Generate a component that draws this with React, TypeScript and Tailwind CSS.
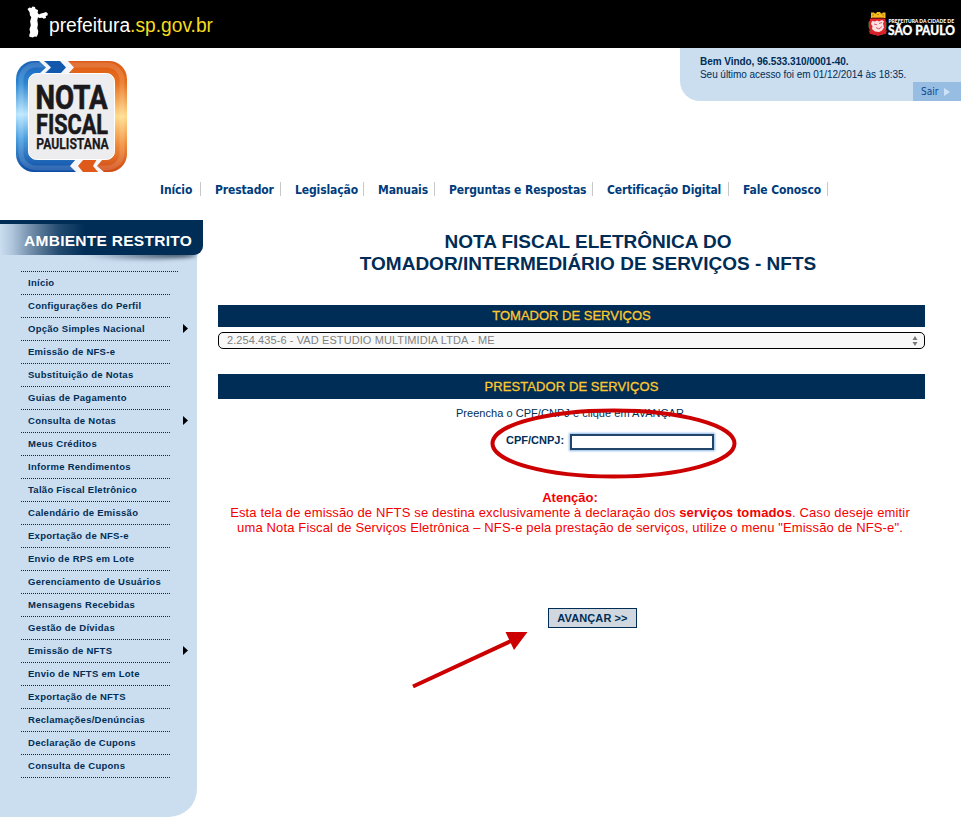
const menu: { label: string; sub?: boolean }[] = [
  { label: "Início" },
  { label: "Configurações do Perfil" },
  { label: "Opção Simples Nacional", sub: true },
  { label: "Emissão de NFS-e" },
  { label: "Substituição de Notas" },
  { label: "Guias de Pagamento" },
  { label: "Consulta de Notas", sub: true },
  { label: "Meus Créditos" },
  { label: "Informe Rendimentos" },
  { label: "Talão Fiscal Eletrônico" },
  { label: "Calendário de Emissão" },
  { label: "Exportação de NFS-e" },
  { label: "Envio de RPS em Lote" },
  { label: "Gerenciamento de Usuários" },
  { label: "Mensagens Recebidas" },
  { label: "Gestão de Dívidas" },
  { label: "Emissão de NFTS", sub: true },
  { label: "Envio de NFTS em Lote" },
  { label: "Exportação de NFTS" },
  { label: "Reclamações/Denúncias" },
  { label: "Declaração de Cupons" },
  { label: "Consulta de Cupons" },
];

const nav = [
  { label: "Início", width: "w-[41px]" },
  { label: "Prestador", width: "w-[66px]" },
  { label: "Legislação", width: "w-[69px]" },
  { label: "Manuais", width: "w-[57px]" },
  { label: "Perguntas e Respostas", width: "w-[144px]" },
  { label: "Certificação Digital", width: "w-[122px]" },
  { label: "Fale Conosco", width: "w-[85px]" },
];

function PrefeituraLogo() {
  return (
    <svg className="block" width="200" height="48" viewBox="20 0 200 48">
      <path
        d="M27.500 9l2-1.500 2 .5 1-1.500 2.500.5.500 2 2.500 1-.3 3 1.300 1.500 2-1 3-.8 2-.7 1.800 1.500-.3 2-1.800.5.300 2-2.500.7-1-1-3 .3-1.500-.7-.7 3 .6 4-.6 4 1 3-.4 3-1.200 2.500-2-.4-2 1.200-3.200-.8-.3-1.500 1-3-.7-3 1.300-4-.7-4 1.200-4-1.400-2-.3-3-1-1.500z"
        fill="#fff"
      />
      <text x="49" y="32" fontSize="19.500" fontFamily="Liberation Sans, Arial, sans-serif" textLength="164" lengthAdjust="spacingAndGlyphs" fill="#fff">
        prefeitura<tspan fill="#f5dc1e">.sp.gov.br</tspan>
      </text>
    </svg>
  );
}

function CityLogo() {
  return (
    <svg className="block" width="93" height="48" viewBox="868 0 93 48">
      <path d="M871 12.500h3l1 1h1l1-1.500h3l1 1.500h1l1-1h2.500v5.500H871z" fill="#f0bd1e" />
      <path d="M872 15h2M877 14.500h2M882 15h2M872 17.500h12" stroke="#b86a10" strokeWidth=".8" />
      <path d="M868.500 22l2-2h14l2 2v5l-1 5-3 3h-9l-3-3-2-5z" fill="#3d7a3c" />
      <path d="M870 18.500h15.500v9.500c0 4-3 6-7.700 7.500-4.800-1.500-7.800-3.500-7.800-7.500z" fill="#e3222d" />
      <path d="M872 21l3 .5 2-1 2 1 3-1.500 2 1.500-1 2 1 4-2 3-3 1.500-4-.5-3-2.500.5-3-1.500-2z" fill="#fbe3e3" />
      <path d="M874 24l3 .8M879 23.500l3-1M876 27.500l3 1.500 3-2.500" stroke="#d84850" fill="none" strokeWidth=".9" />
      <path d="M868.500 30l4 2.500h10.500l4-2.500-1 4-4 .5-4 1.500-4-1.500-4-.5z" fill="#d51f28" />
      <text x="888.500" y="22.500" fontSize="5.300" fontWeight="900" fontFamily="Lato, sans-serif" textLength="65.500" lengthAdjust="spacingAndGlyphs" fill="#fff">PREFEITURA DA CIDADE DE</text>
      <text x="888" y="35" fontSize="12.800" fontWeight="900" fontFamily="Lato, sans-serif" textLength="67" lengthAdjust="spacingAndGlyphs" fill="#fff" stroke="#fff" strokeWidth=".3">SÃO PAULO</text>
    </svg>
  );
}

function NotaLogo() {
  const font = "Roboto, Liberation Sans, sans-serif";
  return (
    <svg className="block" width="111" height="111" viewBox="0 0 111 111">
      <defs>
        <linearGradient id="blue" x1="0" y1="0" x2="0" y2="1">
          <stop offset="0" stopColor="#1b62b8" />
          <stop offset=".2" stopColor="#2b86d2" />
          <stop offset=".48" stopColor="#b9e6ff" />
          <stop offset=".7" stopColor="#4a9fe0" />
          <stop offset="1" stopColor="#0b4aa2" />
        </linearGradient>
        <linearGradient id="orange" x1="0" y1="0" x2="0" y2="1">
          <stop offset="0" stopColor="#dc5a16" />
          <stop offset=".2" stopColor="#e8701c" />
          <stop offset=".5" stopColor="#ffdc8c" />
          <stop offset=".75" stopColor="#f08c38" />
          <stop offset="1" stopColor="#cf4712" />
        </linearGradient>
        <clipPath id="ring">
          <rect width="111" height="111" rx="18" />
        </clipPath>
      </defs>
      <g clipPath="url(#ring)">
        <path d="M0 0h66v111H0z" fill="url(#blue)" />
        <path d="M52 0h59v111H62V50z" fill="url(#orange)" />
        <rect x="5" y="4" width="101" height="103" rx="15" fill="none" stroke="#fff" strokeOpacity=".14" strokeWidth="5" />
        <path d="M30 0h14l7 6.500-7 6.500H30l5-6.500z" fill="#1259ae" />
        <path d="M23 0h5l7 6.500-7 6.500h-5l7-6.500zM44 0h8l6 6.500-6 6.500h-8l6-6.500z" fill="#f4f6fa" />
        <path d="M67 98h14v13H67l-5-6z" fill="#df591b" />
        <path d="M60 98h8l-6 7 5 6h-7l-6-6zM81 98h6l-6 7 7 6h-6l-5-6z" fill="#f4f6fa" />
      </g>
      <rect x="12.500" y="12.500" width="86" height="86" rx="8" fill="#ededef" stroke="#fff" />
      <g fontFamily={font} fontWeight="bold" fill="#1b191b" stroke="#1b191b">
        <text x="19.500" y="47.500" fontSize="33.500" textLength="72" lengthAdjust="spacingAndGlyphs" strokeWidth=".7">NOTA</text>
        <text x="20" y="73.300" fontSize="27" textLength="72" lengthAdjust="spacingAndGlyphs" strokeWidth=".6">FISCAL</text>
        <text x="20.300" y="88" fontSize="14" textLength="72.500" lengthAdjust="spacingAndGlyphs" strokeWidth=".25">PAULISTANA</text>
      </g>
    </svg>
  );
}

function Welcome() {
  return (
    <div className="flex h-[53px] w-[281px] flex-col overflow-hidden rounded-bl-[20px] bg-[#cbdef0] text-[10px] leading-[13px]">
      <div className="pl-5 pt-[7px] whitespace-nowrap text-[#002d56]">
        <p className="font-bold tracking-[-0.050px]">Bem Vindo, 96.533.310/0001-40.</p>
        <p className="tracking-[-0.050px]">Seu último acesso foi em 01/12/2014 às 18:35.</p>
      </div>
      <button className="mt-auto flex h-[19px] w-12 items-center gap-1.5 self-end bg-[#97bde2] pl-2 font-['DejaVu_Sans_Condensed',sans-serif] text-[10px] text-[#0a4a8c]">
        Sair
        <svg width="6" height="8" viewBox="0 0 6 8"><path d="M0 0l6 4-6 4z" fill="#cfe3f6" /></svg>
      </button>
    </div>
  );
}

function Sidebar() {
  return (
    <aside className="relative h-[597px] w-[203px] shrink-0">
      <div className="h-full w-[197px] rounded-br-[28px] bg-[#cbdef0] pt-[51px]">
        <div className="ml-[21px] h-[1px] w-[157px] bg-[repeating-linear-gradient(90deg,#002d56_0_1px,transparent_1px_2px)]" />
        <ul>
          {menu.map((m) => (
            <li key={m.label} className="ml-[21px] flex h-[23px] flex-col">
              <div className="flex h-[22px] items-center justify-between pl-[7px] pr-[9px] text-[9.500px] leading-[22px] font-bold tracking-[0.270px] whitespace-nowrap text-[#002d56]">
                {m.label}
                {m.sub && (
                  <svg className="-mt-px" width="5" height="9" viewBox="0 0 5 9"><path d="M0 0l5 4.500L0 9z" fill="#000" /></svg>
                )}
              </div>
              <div className="h-[1px] w-[150px] bg-[repeating-linear-gradient(90deg,#002d56_0_1px,transparent_1px_2px)]" />
            </li>
          ))}
        </ul>
      </div>
      <div className="absolute top-[31px] left-[80px] h-[8px] w-[116px] rounded-[50%] bg-[linear-gradient(90deg,transparent,#24384d)] blur-[2px]" />
      <h2 className="absolute top-0 left-0 h-[35px] w-[203px] rounded-br-[9px] border-t-4 border-[#002d56] bg-[linear-gradient(90deg,#cbdef0_0,#b0c6dc_12px,#7590ac_30px,#254c71_58px,#002d56_85px)] pl-6 text-[15.500px] leading-[34px] font-bold tracking-[0.280px] whitespace-nowrap text-white">
        AMBIENTE RESTRITO
      </h2>
    </aside>
  );
}

function NftsForm() {
  return (
    <main className="ml-[15px] flex w-[707px] flex-col items-center text-[#002d56]">
      <h1 className="mt-[11px] ml-[33px] text-center text-[19px] leading-[22px] font-bold whitespace-nowrap">
        NOTA FISCAL ELETRÔNICA DO
        <br />
        TOMADOR/INTERMEDIÁRIO DE SERVIÇOS - NFTS
      </h1>
      <h2 className="mt-[30px] h-[22px] w-full bg-[#002d56] text-center text-[13px] leading-[21px] text-[#fdc82f] [-webkit-text-stroke:0.3px_#fdc82f]">
        TOMADOR DE SERVIÇOS
      </h2>
      <div className="mt-[5px] flex h-[17px] w-full items-center justify-between rounded-[5px] border border-black bg-[#f8f8f8] pr-[6px] pl-2 text-[11px] leading-[15px] tracking-[0.090px] text-[#808080]">
        <span>2.254.435-6 - VAD ESTUDIO MULTIMIDIA LTDA - ME</span>
        <svg width="6" height="10" viewBox="0 0 6 10"><path d="M3 0l2.500 4h-5zM3 10l2.500-4h-5z" fill="#777" /></svg>
      </div>
      <h2 className="mt-[25px] h-[25px] w-full bg-[#002d56] text-center text-[13px] leading-[25px] tracking-[0.080px] text-[#fdc82f] [-webkit-text-stroke:0.3px_#fdc82f]">
        PRESTADOR DE SERVIÇOS
      </h2>
      <p className="mt-[7px] text-[11px] leading-[14px] tracking-[0.040px] whitespace-nowrap">Preencha o CPF/CNPJ e clique em AVANÇAR.</p>
      <label className="relative mt-[13px] flex h-[17px] items-center self-start pl-[288px] text-[11px] leading-[17px] font-bold whitespace-nowrap">
        <span className="mb-[3px] w-[64px]">CPF/CNPJ:</span>
        <input className="h-[16px] w-[144px] border-2 border-[#24456a] bg-white shadow-[0_0_2px_1px_#8db9e8] outline-none" />
        <svg className="pointer-events-none absolute top-[-28px] left-[269px]" width="252" height="78" viewBox="487 405 252 78">
          <ellipse cx="613.500" cy="443.500" rx="121" ry="33" fill="none" stroke="#cc0000" strokeWidth="4" />
        </svg>
      </label>
      <div className="mt-[40px] -ml-[3px] w-full text-center text-[13px] leading-[15px] tracking-[0.145px] whitespace-nowrap text-[#f50000]">
        <p className="font-bold tracking-normal">Atenção:</p>
        <p>Esta tela de emissão de NFTS se destina exclusivamente à declaração dos <b>serviços tomados</b>. Caso deseje emitir</p>
        <p>uma Nota Fiscal de Serviços Eletrônica – NFS-e pela prestação de serviços, utilize o menu "Emissão de NFS-e".</p>
      </div>
      <div className="relative mt-[73px] ml-[42px] h-[20px]">
        <button className="block h-[20px] w-[89px] border border-[#002d56] bg-[#d0d7df] text-[11px] leading-[18px] font-bold tracking-[0.100px] whitespace-nowrap">AVANÇAR &gt;&gt;</button>
        <svg className="absolute top-[22px] left-[-138px]" width="120" height="60" viewBox="410 630 120 60">
          <path d="M413 686.500L512 640.500" stroke="#cc0000" strokeWidth="4" />
          <path d="M505.500 632h22L514 650z" fill="#cc0000" />
        </svg>
      </div>
    </main>
  );
}

export default function App() {
  return (
    <div className="h-[826px] w-[961px] overflow-hidden bg-white font-['Liberation_Sans',Arial,sans-serif]">
      <header className="flex h-12 justify-between bg-black pl-5">
        <PrefeituraLogo />
        <CityLogo />
      </header>
      <div className="flex h-[124px] items-start justify-between pl-4">
        <div className="pt-[13px]"><NotaLogo /></div>
        <Welcome />
      </div>
      <nav className="flex h-12 gap-[14px] pt-[10px] pl-[160px]">
        {nav.map((n) => (
          <a
            key={n.label}
            className={`${n.width} h-[14px] shrink-0 border-r border-[#c8c8c8] font-['DejaVu_Sans_Condensed','DejaVu_Sans',sans-serif] text-[12px] leading-[16px] font-bold font-stretch-condensed tracking-[-0.120px] whitespace-nowrap text-[#003c7b]`}
          >
            {n.label}
          </a>
        ))}
      </nav>
      <div className="flex">
        <Sidebar />
        <NftsForm />
      </div>
    </div>
  );
}
